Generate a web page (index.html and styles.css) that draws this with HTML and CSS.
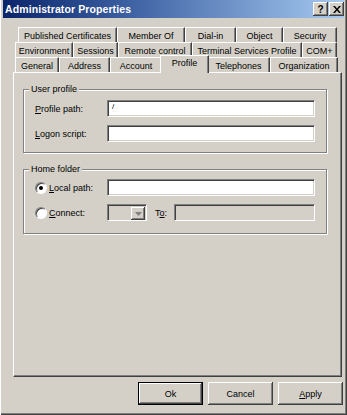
FILE: index.html
```html
<!DOCTYPE html>
<html>
<head>
<meta charset="utf-8">
<title>Administrator Properties</title>
<link rel="stylesheet" href="styles.css">
</head>
<body>
<div class="window">
  <div class="titlebar">
    <span class="title">Administrator Properties</span>
    <div class="tbtns">
      <span class="tbtn help">?</span>
      <span class="tbtn close"><svg width="8" height="7" viewBox="0 0 8 7"><path d="M0 0h2l2 2.5L6 0h2L5 3.5 8 7H6L4 4.5 2 7H0l3-3.5z" fill="#000"/></svg></span>
    </div>
  </div>
  <div class="content">
    <div class="tabs">
      <div class="tabrow r1">
        <div class="tab">Published Certificates</div>
        <div class="tab">Member Of</div>
        <div class="tab">Dial-in</div>
        <div class="tab">Object</div>
        <div class="tab">Security</div>
      </div>
      <div class="tabrow r2">
        <div class="tab">Environment</div>
        <div class="tab">Sessions</div>
        <div class="tab">Remote control</div>
        <div class="tab">Terminal Services Profile</div>
        <div class="tab">COM+</div>
      </div>
      <div class="tabrow r3">
        <div class="tab">General</div>
        <div class="tab">Address</div>
        <div class="tab">Account</div>
        <div class="tab active">Profile</div>
        <div class="tab">Telephones</div>
        <div class="tab">Organization</div>
      </div>
    </div>
    <div class="panel">
      <fieldset class="group g1">
        <legend>User profile</legend>
        <div class="frow">
          <span class="label"><u>P</u>rofile path:</span>
          <div class="field wide"><span class="val">/</span></div>
        </div>
        <div class="frow">
          <span class="label"><u>L</u>ogon script:</span>
          <div class="field wide"></div>
        </div>
      </fieldset>
      <fieldset class="group g2">
        <legend>Home folder</legend>
        <div class="frow">
          <span class="radio checked"><span class="dot"></span></span>
          <span class="rlabel"><u>L</u>ocal path:</span>
          <div class="field wide"></div>
        </div>
        <div class="frow">
          <span class="radio"></span>
          <span class="rlabel"><u>C</u>onnect:</span>
          <div class="combo">
            <span class="drop"><svg width="7" height="4" viewBox="0 0 7 4"><path d="M0 0h7L3.5 4z" fill="#808080"/></svg></span>
          </div>
          <span class="tolabel">T<u>o</u>:</span>
          <div class="field disabled narrow"></div>
        </div>
      </fieldset>
    </div>
    <div class="buttons">
      <button class="btn default">Ok</button>
      <button class="btn">Cancel</button>
      <button class="btn"><u>A</u>pply</button>
    </div>
  </div>
</div>
</body>
</html>
```
FILE: styles.css
```css
* { box-sizing: border-box; }
html, body { margin: 0; padding: 0; }
body {
  width: 347px;
  height: 415px;
  overflow: hidden;
  background: #d4d0c8;
  font-family: "Liberation Sans", Arial, sans-serif;
  font-size: 9px;
  color: #000;
}
.window {
  width: 347px;
  height: 415px;
  display: flex;
  flex-direction: column;
  padding: 0 3px 3px 3px;
  background: #d4d0c8;
  box-shadow: inset 1px 0 #fff, inset -1px -1px #404040, inset -2px -2px #808080;
}
.titlebar {
  height: 18px;
  flex: 0 0 18px;
  display: flex;
  align-items: center;
  justify-content: space-between;
  padding: 0 0 0 2px;
  background: linear-gradient(90deg, #0a246a 0%, #3a5ea0 35%, #a6caf0 100%);
}
.title { color: #fff; font-weight: bold; font-size: 10.5px; letter-spacing: 0.1px; }
.tbtns { display: flex; gap: 1px; }
.tbtn {
  width: 15px;
  height: 14px;
  display: flex;
  align-items: center;
  justify-content: center;
  background: #d4d0c8;
  box-shadow: inset -1px -1px #404040, inset 1px 1px #fff, inset -2px -2px #808080;
  font-weight: bold;
  font-size: 10px;
}
.content {
  flex: 1;
  display: flex;
  flex-direction: column;
  padding: 9px 2px 0 10px;
}
.tabs { display: flex; flex-direction: column; }
.tabrow { display: flex; height: 15px; }
.r1 { margin-left: 5px; }
.r2, .r3 { margin-left: 2px; }
.tab {
  height: 15px;
  display: flex;
  align-items: center;
  justify-content: center;
  border-top: 1px solid #fff;
  border-left: 1px solid #fff;
  border-right: 1px solid #404040;
  box-shadow: inset -1px 0 #808080;
  background: #d4d0c8;
  white-space: nowrap;
  padding-top: 1px;
}
.r1 .tab:nth-child(1) { width: 99px; }
.r1 .tab:nth-child(2) { width: 68px; }
.r1 .tab:nth-child(3) { width: 51px; }
.r1 .tab:nth-child(4) { width: 47px; }
.r1 .tab:nth-child(5) { width: 54px; }
.r2 .tab:nth-child(1) { width: 58px; }
.r2 .tab:nth-child(2) { width: 45px; }
.r2 .tab:nth-child(3) { width: 74px; }
.r2 .tab:nth-child(4) { width: 110px; }
.r2 .tab:nth-child(5) { width: 35px; }
.r3 .tab:nth-child(1) { width: 44px; }
.r3 .tab:nth-child(2) { width: 51px; }
.r3 .tab:nth-child(3) { width: 52px; }
.r3 .tab:nth-child(4) { width: 45px; }
.r3 .tab:nth-child(5) { width: 63px; }
.r3 .tab:nth-child(6) { width: 68px; }
.r3 .tab.active {
  width: 49px;
  height: 18px;
  margin: -2px -2px -1px -2px;
  position: relative;
  z-index: 1;
  padding-top: 0;
  align-items: flex-start;
  padding-top: 2px;
}
.panel {
  height: 305px;
  flex: 0 0 305px;
  border-top: 1px solid #fff;
  border-left: 1px solid #fff;
  border-right: 1px solid #404040;
  border-bottom: 1px solid #404040;
  box-shadow: inset -1px -1px #808080;
  padding: 11px 14px 0 9px;
}
.group {
  margin: 0;
  border: 1px solid #808080;
  box-shadow: inset 1px 1px #fff, 1px 1px #fff;
  padding: 5px 11px 10px 11px;
  min-width: 0;
}
.group legend {
  padding: 0 2px;
  margin-left: -6px;
  background: #d4d0c8;
  line-height: 11px;
}
.g2 { margin-top: 11px; padding-top: 4px; padding-bottom: 12px; }
.frow { display: flex; align-items: center; height: 17px; }
.frow + .frow { margin-top: 8px; }
.label { width: 72px; flex: 0 0 72px; }
.rlabel { width: 58px; flex: 0 0 58px; }
.field {
  height: 17px;
  background: #fff;
  border-top: 1px solid #808080;
  border-left: 1px solid #808080;
  border-right: 1px solid #fff;
  border-bottom: 1px solid #fff;
  box-shadow: inset 1px 1px #404040, inset -1px -1px #d4d0c8;
  padding: 2px 4px;
}
.wide { flex: 1; }
.val { font-size: 8px; line-height: 8px; display: block; }
.field.disabled { background: #d4d0c8; }
.radio {
  width: 12px;
  height: 12px;
  flex: 0 0 12px;
  margin-right: 2px;
  border-radius: 50%;
  border: 1px solid;
  border-color: #808080 #fff #fff #808080;
  box-shadow: inset 1px 1px #404040;
  background: #fff;
  display: flex;
  align-items: center;
  justify-content: center;
}
.radio .dot { width: 4px; height: 4px; border-radius: 50%; background: #000; }
.combo {
  width: 40px;
  height: 17px;
  flex: 0 0 40px;
  background: #d4d0c8;
  border-top: 1px solid #808080;
  border-left: 1px solid #808080;
  border-right: 1px solid #fff;
  border-bottom: 1px solid #fff;
  box-shadow: inset 1px 1px #404040;
  display: flex;
  justify-content: flex-end;
  padding: 2px 1px 1px 2px;
}
.drop {
  width: 14px;
  height: 13px;
  display: flex;
  align-items: center;
  justify-content: center;
  box-shadow: inset -1px -1px #404040, inset 1px 1px #fff, inset -2px -2px #808080;
}
.tolabel { width: 27px; flex: 0 0 27px; padding-left: 8px; }
.narrow { flex: 1; }
.buttons {
  display: flex;
  justify-content: flex-end;
  gap: 5px;
  padding-top: 5px;
  margin-right: -1px;
}
.btn {
  width: 65px;
  height: 23px;
  font-family: "Liberation Sans", Arial, sans-serif;
  font-size: 9px;
  color: #000;
  background: #d4d0c8;
  border: 0;
  padding: 0;
  box-shadow: inset -1px -1px #404040, inset 1px 1px #fff, inset -2px -2px #808080;
}
.btn.default {
  border: 1px solid #000;
  box-shadow: inset -1px -1px #404040, inset 1px 1px #fff, inset -2px -2px #808080;
}
```
